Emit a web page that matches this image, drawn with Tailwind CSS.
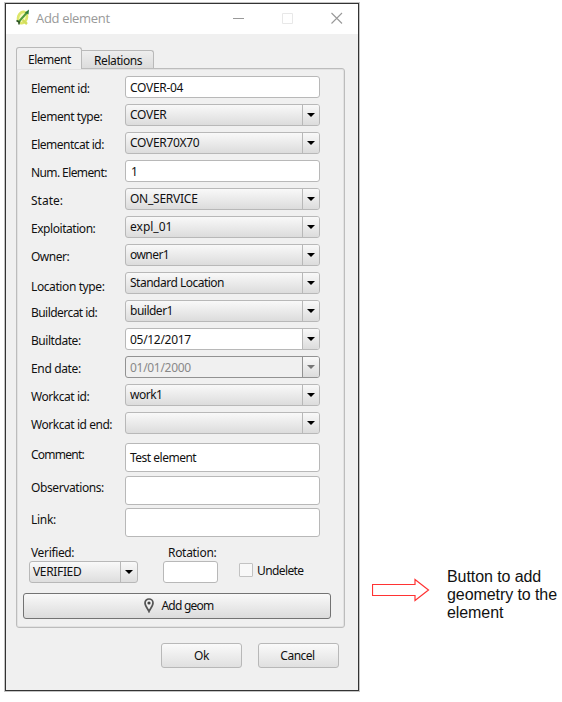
<!DOCTYPE html>
<html lang="en">
<head>
<meta charset="utf-8">
<title>Add element</title>
<script src="https://cdn.jsdelivr.net/npm/@tailwindcss/browser@4"></script>
</head>
<body class="bg-white w-[562px] h-[702px] overflow-hidden flex font-['Noto_Sans',sans-serif] text-[12px] leading-4 text-[#111] whitespace-nowrap">
<main class="ml-[5px] mt-[3px] w-[354px] h-[688px] shrink-0 border border-[#333] bg-[#f0f0f0] shadow-[0_0_0_1px_#c4c4c4] flex flex-col">
  <header class="h-[30px] shrink-0 bg-white flex items-center pl-[9px] pr-[15px] text-[#999]">
    <svg class="w-4 h-[18px] -mt-1" viewBox="0 0 16 18"><ellipse cx="7.500" cy="9.500" rx="4.300" ry="5.800" transform="rotate(20 7.500 9.500)" fill="#fafbc4" stroke="#dde66a" stroke-width="2.600"/><path d="M7.500 12l4.500 4" stroke="#d3de5c" stroke-width="2.400"/><path d="M4 13.500L12 4.500" stroke="#4f9a3c" stroke-width="2"/><path d="M10 4.500l4-3-.5 5z" fill="#2b7a38"/><path d="M1.500 12.500l3.500 2M4 14.500v2" stroke="#2a5224" stroke-width="1.500"/></svg>
    <h1 class="ml-[5px] -mt-[3px] font-['Open_Sans',sans-serif] text-[13px] tracking-[-0.33px]">Add element</h1>
    <svg class="ml-auto -mt-[3px] w-[110px] h-3" viewBox="0 0 110 12" fill="none"><path d="M0 6.500h11" stroke="#999"/><path d="M49.500 1.500h10v10h-10z" stroke="#e8e8e8"/><path d="M98.500 1l10.500 10.500M109 1l-10.500 10.500" stroke="#999" stroke-width="1.100"/></svg>
  </header>
  <nav class="mt-[13px] h-[21px] shrink-0 pl-[10px] flex items-end">
    <div class="relative z-10 w-[66px] h-[22px] -mb-px border border-b-0 border-[#b9b9b9] rounded-t-[3px] bg-[#f0f0f0] pt-[4px] pl-[11px] tracking-[-0.5px]">Element</div>
    <div class="w-[72px] h-[18px] border border-b-0 border-l-0 border-[#b9b9b9] rounded-tr-[3px] bg-linear-to-b from-[#eee] to-[#dcdcdc] pt-[2px] pl-[12px] leading-[15px] tracking-[-0.42px]">Relations</div>
  </nav>
  <section class="ml-[10px] w-[329px] h-[560px] shrink-0 border border-[#bcbcbc] rounded-[3px] rounded-tl-none shadow-[inset_0_0_0_1px_#e2e2e2] flex flex-col pt-[7px]">
    <div id="rows" class="pl-[14px]"></div>
    <div class="flex mt-[3px] pl-[12px] h-[40px]">
      <div class="w-[134px]"><div class="pl-[2px] h-[17px] leading-[17px] tracking-[-0.35px]">Verified:</div>
        <div class="w-[109px] h-[22px] border border-[#b8b8b8] rounded-[3px] bg-linear-to-b from-[#f9f9f9] to-[#dedede] flex items-center"><span class="pl-[3px] flex-1 tracking-[-0.35px]">VERIFIED</span><span class="w-[17px] h-full border-l border-[#b8b8b8] flex items-center justify-center"><svg class="w-2 h-1" viewBox="0 0 8 4"><path d="M0 0h8L4 4z"/></svg></span></div></div>
      <div class="w-[76px]"><div class="pl-[5px] h-[17px] leading-[17px] tracking-[-0.3px]">Rotation:</div><div class="w-[55px] h-[22px] border border-[#b8b8b8] rounded-[3px] bg-white"></div></div>
      <div class="pt-[19px] flex items-start gap-[4px]"><span class="w-[14px] h-[14px] border border-[#c2c2c2] rounded-[1px] bg-[#f8f8f8]"></span><span class="tracking-[-0.6px]">Undelete</span></div>
    </div>
    <button class="ml-[6px] mt-[9px] w-[308px] h-[26px] shrink-0 border border-[#737373] rounded-[3px] bg-linear-to-b from-[#f9f9f9] to-[#dcdcdc] flex items-center justify-center gap-[7px] pl-[4px]"><svg class="w-[10px] h-[15px]" viewBox="0 0 10 15"><path d="M5 13.500C4.200 11.500 1 8 1 5a4 4 0 0 1 8 0c0 3-3.200 6.500-4 8.500z" fill="#eee" stroke="#555" stroke-width="1.700"/><circle cx="5" cy="5" r="1.600" fill="#444"/></svg><span class="tracking-[-0.75px]">Add geom</span></button>
  </section>
  <footer class="mt-[15px] ml-[155px] flex gap-[16px]">
    <button class="w-[81px] h-[25px] border border-[#b8b8b8] rounded-[3px] bg-linear-to-b from-[#fafafa] to-[#e0e0e0] pt-px tracking-[-0.5px]">Ok</button>
    <button class="w-[81px] h-[25px] border border-[#b8b8b8] rounded-[3px] bg-linear-to-b from-[#fafafa] to-[#e0e0e0] pt-px pr-[2px] tracking-[-0.5px]">Cancel</button>
  </footer>
</main>
<aside class="ml-[13px] mt-[568px] flex">
  <svg class="w-[58px] h-6 mt-[10px]" viewBox="0 0 58 24" fill="none"><path d="M.5 6.500h42.500V1.500L56.500 12 43 22.500v-5H.5z" stroke="#f33" stroke-width="1.200"/></svg>
  <p class="ml-[17px] font-['Liberation_Sans',sans-serif] text-[16px] leading-[18px] tracking-[-0.08px]">Button to add<br>geometry to the<br>element</p>
</aside>
<script>
const rows = [
  ['Element id:', 'text', 'COVER-04', 'pt-[5px] tracking-[-0.4px]', 'pt-[2px] tracking-[-0.3px]'],
  ['Element type:', 'combo', 'COVER', 'pt-[5px] tracking-[-0.45px]', 'tracking-[-0.3px]'],
  ['Elementcat id:', 'combo', 'COVER70X70', 'pt-[5px] tracking-[-0.5px]', 'tracking-[-0.3px]'],
  ['Num. Element:', 'text', '1', 'pt-[5px] tracking-[-0.6px]', 'pl-[1px] pt-[2px]'],
  ['State:', 'combo', 'ON_SERVICE', 'pt-[5px]', 'tracking-[-0.25px]'],
  ['Exploitation:', 'combo', 'expl_01', 'pt-[5px] tracking-[-0.45px]', ''],
  ['Owner:', 'combo', 'owner1', 'pt-[5px] tracking-[-0.5px]', 'tracking-[-0.55px]'],
  ['Location type:', 'combo', 'Standard Location', 'pt-[7px] tracking-[-0.4px]', 'tracking-[-0.5px]'],
  ['Buildercat id:', 'combo', 'builder1', 'pt-[5px] tracking-[-0.55px]', 'tracking-[-0.5px]'],
  ['Builtdate:', 'date', '05/12/2017', 'pt-[5px] tracking-[-0.45px]', 'pt-[2px] tracking-[-0.3px]'],
  ['End date:', 'off', '01/01/2000', 'pt-[5px] tracking-[-0.35px]', 'pt-[2px] tracking-[-0.3px]'],
  ['Workcat id:', 'combo', 'work1', 'pt-[5px] tracking-[-0.45px]', 'tracking-[-0.5px]'],
  ['Workcat id end:', 'combo', '', 'pt-[5px] tracking-[-0.45px]', ''],
  ['Comment:', 'area', 'Test element', 'pt-[4px] tracking-[-0.75px]', 'pt-px tracking-[-0.5px]'],
  ['Observations:', 'area', '', 'pt-[4px] tracking-[-0.4px]', ''],
  ['Link:', 'area', '', 'pt-[4px] tracking-[-0.3px]', '']
];
const look = {
  text: 'h-[22px] border-[#b8b8b8] bg-white',
  area: 'h-[29px] border-[#b8b8b8] bg-white',
  combo: 'h-[22px] border-[#b8b8b8] bg-linear-to-b from-[#f9f9f9] to-[#dcdcdc]',
  date: 'h-[22px] border-[#b8b8b8] bg-white',
  off: 'h-[22px] border-[#929292] text-[#888]'
};
const arrow = (off) => `<span class="w-[17px] h-full border-l ${off ? 'border-[#929292] text-[#777]' : 'border-[#b8b8b8] text-black'} rounded-r-[2px] bg-linear-to-b from-[#f9f9f9] to-[#dcdcdc] flex items-center justify-center"><svg class="w-2 h-1" viewBox="0 0 8 4" fill="currentColor"><path d="M0 0h8L4 4z"/></svg></span>`;
document.getElementById('rows').innerHTML = rows.map(([label, kind, value, drop, nudge], i) => `
  <div class="flex ${kind === 'area' ? 'h-[32.5px]' : i === 12 ? 'h-[31px]' : 'h-[28px]'}">
    <label class="w-[94px] ${drop}">${label}</label>
    <div class="w-[195px] border rounded-[3px] flex items-center ${look[kind]}">
      <span class="flex-1 ml-[4px] ${nudge}">${value}</span>${['text', 'area'].includes(kind) ? '' : arrow(kind === 'off')}
    </div>
  </div>`).join('');
</script>
</body>
</html>
